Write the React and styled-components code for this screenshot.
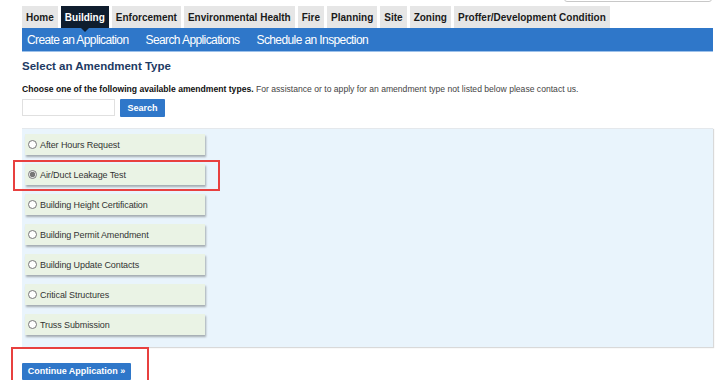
import React, { useState } from 'react'
import styled, { createGlobalStyle } from 'styled-components'

const GlobalStyle = createGlobalStyle`
  body {
    margin: 0;
    background: #fff;
    font-family: "Liberation Sans", Arial, sans-serif;
  }
`

const tabs = ['Home', 'Building', 'Enforcement', 'Environmental Health', 'Fire', 'Planning', 'Site', 'Zoning', 'Proffer/Development Condition']
const links = ['Create an Application', 'Search Applications', 'Schedule an Inspection']
const types = [
  'After Hours Request',
  'Air/Duct Leakage Test',
  'Building Height Certification',
  'Building Permit Amendment',
  'Building Update Contacts',
  'Critical Structures',
  'Truss Submission',
]

export default function App() {
  const [selected, setSelected] = useState(1)

  return (
    <Page>
      <GlobalStyle />
      <TopBar>
        <GlobalSearch />
      </TopBar>
      <Tabs>
        {tabs.map((t) => (
          <Tab key={t} active={t === 'Building'}>{t}</Tab>
        ))}
      </Tabs>
      <NavBar>
        {links.map((l) => (
          <NavLink key={l}>{l}</NavLink>
        ))}
      </NavBar>
      <Title>Select an Amendment Type</Title>
      <Desc>
        <b>Choose one of the following available amendment types.</b> For assistance or to apply for an amendment type not listed below please contact us.
      </Desc>
      <SearchRow>
        <SearchInput />
        <SmallButton>Search</SmallButton>
      </SearchRow>
      <Panel>
        {types.map((t, i) => (
          <Item key={t}>
            <Radio type="radio" name="type" checked={selected === i} onChange={() => setSelected(i)} />
            <span>{t}</span>
            {i === 1 && <Highlight />}
          </Item>
        ))}
      </Panel>
      <Footer>
        <ContinueButton>
          Continue Application »
          <Highlight wide />
        </ContinueButton>
      </Footer>
    </Page>
  )
}

const Page = styled.div`
  padding: 0 7px 0 22px;
`

const TopBar = styled.div`
  height: 6px;
  overflow: hidden;
  display: flex;
  justify-content: flex-end;
`

const GlobalSearch = styled.div`
  width: 148px;
  height: 20px;
  margin-top: -18px;
  margin-right: 1px;
  border: 1px solid #c8c8c8;
  border-radius: 3px;
  box-sizing: border-box;
`

const Tabs = styled.div`
  display: flex;
  gap: 3px;
  height: 22px;
`

const Tab = styled.div`
  position: relative;
  display: flex;
  align-items: center;
  padding: 0 4px;
  font-size: 10px;
  font-weight: bold;
  color: ${(p) => (p.active ? '#fff' : '#1a1a1a')};
  background: ${(p) => (p.active ? '#0f1d2e' : '#e6e6e6')};

  &::after {
    content: '';
    display: ${(p) => (p.active ? 'block' : 'none')};
    position: absolute;
    left: 50%;
    bottom: -4px;
    margin-left: -4px;
    border-left: 4px solid transparent;
    border-right: 4px solid transparent;
    border-top: 4px solid #0f1d2e;
  }
`

const NavBar = styled.div`
  display: flex;
  align-items: center;
  gap: 17px;
  height: 24px;
  padding-left: 5px;
  background: #2f77c9;
  border-bottom: 1px solid #9dc1ea;
  box-sizing: border-box;
`

const NavLink = styled.span`
  color: #fff;
  font-size: 12px;
  letter-spacing: -0.6px;
`

const Title = styled.h2`
  margin: 8px 0 0;
  font-size: 11.5px;
  line-height: 13px;
  color: #1d3a63;
`

const Desc = styled.p`
  margin: 11px 0 0;
  font-size: 8.6px;
  line-height: 11px;
  color: #444;

  b {
    color: #111;
  }
`

const SearchRow = styled.div`
  display: flex;
  gap: 5px;
  margin-top: 4px;
  height: 18px;
`

const SearchInput = styled.input`
  width: 93px;
  height: 17px;
  box-sizing: border-box;
  border: 1px solid #e0e0e0;
  padding: 0 3px;
`

const SmallButton = styled.button`
  width: 45px;
  height: 18px;
  border: none;
  border-radius: 1px;
  background: #2f77c9;
  color: #fff;
  font-family: inherit;
  font-size: 9px;
  font-weight: bold;
  padding: 0;
`

const Panel = styled.div`
  margin-top: 11px;
  height: 219px;
  box-sizing: border-box;
  padding: 5px 0 0 3px;
  background: #e9f4fc;
  border-top: 1px solid #e4e8ec;
  box-shadow: 1px 1px 1px rgba(0, 0, 0, 0.15);
  display: flex;
  flex-direction: column;
  gap: 9px;
`

const Item = styled.label`
  position: relative;
  display: flex;
  align-items: center;
  gap: 2px;
  width: 180px;
  height: 21px;
  padding-left: 3px;
  box-sizing: border-box;
  background: #eaf3e5;
  box-shadow: 1px 2px 2px rgba(0, 0, 0, 0.3);
  font-size: 9px;
  color: #333;
  letter-spacing: -0.1px;
`

const Radio = styled.input`
  width: 9px;
  height: 9px;
  margin: 0 1px 0 0;
  accent-color: #777;
`

const Highlight = styled.span`
  position: absolute;
  left: ${(p) => (p.wide ? '-11px' : '-12px')};
  right: ${(p) => (p.wide ? '-18px' : '-15px')};
  top: ${(p) => (p.wide ? '-16px' : '-4px')};
  bottom: ${(p) => (p.wide ? '-4px' : '-6px')};
  border: 2px solid #e8403f;
  pointer-events: none;
`

const Footer = styled.div`
  margin-top: 13px;
`

const ContinueButton = styled.button`
  position: relative;
  width: 109px;
  height: 17px;
  border: none;
  border-radius: 1px;
  background: #2f77c9;
  color: #fff;
  font-family: inherit;
  font-size: 9px;
  font-weight: bold;
  padding: 0;
`
